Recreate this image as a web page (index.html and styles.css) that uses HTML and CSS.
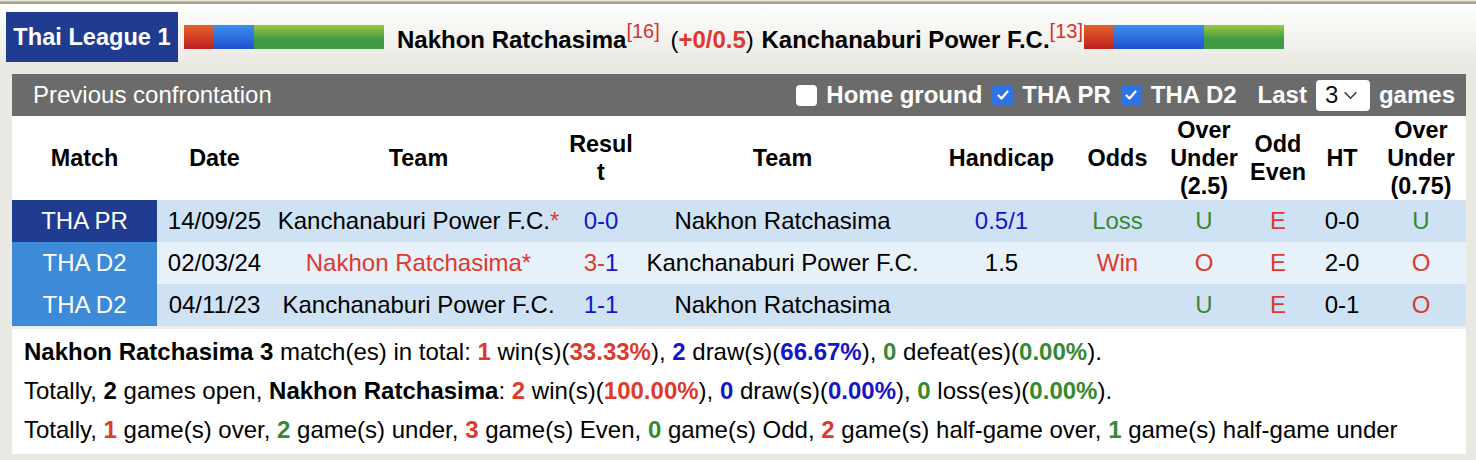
FILE: index.html
```html
<!DOCTYPE html>
<html lang="en">
<head>
<meta charset="utf-8">
<title>Previous confrontation</title>
<link rel="stylesheet" href="styles.css">
</head>
<body>
<div class="rule"></div>
<header class="topbar">
  <div class="league">Thai League 1</div>
  <div class="formbar"><span class="seg red w30"></span><span class="seg blue w40"></span><span class="seg green w130"></span></div>
  <div class="matchup">
    <span class="team">Nakhon Ratchasima</span><sup class="rank">[16]</sup>
    <span class="hcp">(<b class="red-t">+0/0.5</b>)</span>
    <span class="team">Kanchanaburi Power F.C.</span><sup class="rank">[13]</sup>
  </div>
  <div class="formbar tight"><span class="seg red w30"></span><span class="seg blue w90"></span><span class="seg green w80"></span></div>
</header>

<section class="panel">
  <div class="panel-head">
    <div class="title">Previous confrontation</div>
    <div class="filters">
      <label class="opt"><span class="box"></span>Home ground</label>
      <label class="opt"><span class="box on"><svg viewBox="0 0 20 20" width="20" height="20"><path d="M5.5 10.5 L8.5 13.5 L14.5 6.5" fill="none" stroke="#fff" stroke-width="2.2" stroke-linecap="round" stroke-linejoin="round"/></svg></span>THA PR</label>
      <label class="opt"><span class="box on"><svg viewBox="0 0 20 20" width="20" height="20"><path d="M5.5 10.5 L8.5 13.5 L14.5 6.5" fill="none" stroke="#fff" stroke-width="2.2" stroke-linecap="round" stroke-linejoin="round"/></svg></span>THA D2</label>
      <span class="last">Last</span>
      <span class="select">3<svg viewBox="0 0 16 10" width="15" height="9"><path d="M1.5 1.5 L8 8 L14.5 1.5" fill="none" stroke="#333" stroke-width="1.6"/></svg></span>
      <span class="games">games</span>
    </div>
  </div>

  <table class="grid">
    <colgroup>
      <col class="c-match"><col class="c-date"><col class="c-team"><col class="c-res"><col class="c-team2"><col class="c-hcp"><col class="c-odds"><col class="c-ou"><col class="c-oe"><col class="c-ht"><col class="c-ou2">
    </colgroup>
    <thead>
      <tr>
        <th>Match</th><th>Date</th><th>Team</th><th class="res">Result</th><th>Team</th><th>Handicap</th><th>Odds</th><th>Over Under (2.5)</th><th>Odd Even</th><th>HT</th><th>Over Under (0.75)</th>
      </tr>
    </thead>
    <tbody>
      <tr class="r-a">
        <td class="lg dark">THA PR</td><td>14/09/25</td><td>Kanchanaburi Power F.C.<span class="red-t">*</span></td><td class="blue-t">0-0</td><td>Nakhon Ratchasima</td><td class="blue-t">0.5/1</td><td class="green-t">Loss</td><td class="green-t">U</td><td class="red-t">E</td><td>0-0</td><td class="green-t">U</td>
      </tr>
      <tr class="r-b">
        <td class="lg light">THA D2</td><td>02/03/24</td><td class="red-t">Nakhon Ratchasima*</td><td><span class="red-t">3</span><span class="red-t">-</span><span class="blue-t">1</span></td><td>Kanchanaburi Power F.C.</td><td>1.5</td><td class="red-t">Win</td><td class="red-t">O</td><td class="red-t">E</td><td>2-0</td><td class="red-t">O</td>
      </tr>
      <tr class="r-a">
        <td class="lg light">THA D2</td><td>04/11/23</td><td>Kanchanaburi Power F.C.</td><td class="blue-t">1-1</td><td>Nakhon Ratchasima</td><td></td><td></td><td class="green-t">U</td><td class="red-t">E</td><td>0-1</td><td class="red-t">O</td>
      </tr>
    </tbody>
  </table>

  <div class="summary">
    <p><b>Nakhon Ratchasima 3</b> match(es) in total: <b class="red-t">1</b> win(s)(<b class="red-t">33.33%</b>), <b class="blue-t">2</b> draw(s)(<b class="blue-t">66.67%</b>), <b class="green-t">0</b> defeat(es)(<b class="green-t">0.00%</b>).</p>
    <p>Totally, <b>2</b> games open, <b>Nakhon Ratchasima</b>: <b class="red-t">2</b> win(s)(<b class="red-t">100.00%</b>), <b class="blue-t">0</b> draw(s)(<b class="blue-t">0.00%</b>), <b class="green-t">0</b> loss(es)(<b class="green-t">0.00%</b>).</p>
    <p>Totally, <b class="red-t">1</b> game(s) over, <b class="green-t">2</b> game(s) under, <b class="red-t">3</b> game(s) Even, <b class="green-t">0</b> game(s) Odd, <b class="red-t">2</b> game(s) half-game over, <b class="green-t">1</b> game(s) half-game under</p>
  </div>
</section>
</body>
</html>
```

FILE: styles.css
```css
* { box-sizing: border-box; }

html, body {
  margin: 0;
  padding: 0;
  background: #e9e8e2;
  font-family: "Liberation Sans", Arial, sans-serif;
  font-size: 24px;
  color: #000;
}

.rule {
  margin-top: 1px;
  height: 3px;
  background: linear-gradient(#c4bd9f, #9d9474);
}

.topbar {
  display: flex;
  align-items: center;
  padding: 8px 0 4px 6px;
  background: linear-gradient(#ffffff, #e9e8e2);
}

.league {
  width: 172px;
  height: 50px;
  background: #1f3c91;
  color: #fff;
  font-weight: bold;
  font-size: 23.6px;
  display: flex;
  align-items: center;
  justify-content: center;
}

.formbar {
  display: flex;
  height: 24px;
  margin-left: 6px;
}
.formbar.tight { margin-left: 1px; }

.seg { display: block; height: 24px; }
.seg.red { background: linear-gradient(#e3612b, #bf2020); }
.seg.blue { background: linear-gradient(#3a8ff0, #2150cf); }
.seg.green { background: linear-gradient(#9cc840, #3f9a43 60%); }
.w30 { width: 30px; }
.w40 { width: 40px; }
.w80 { width: 80px; }
.w90 { width: 90px; }
.w130 { width: 130px; }

.matchup {
  margin-left: 13px;
  padding-top: 6px;
  white-space: nowrap;
}
.matchup .team { font-weight: bold; }
.rank {
  color: #d8322a;
  font-size: 20px;
  vertical-align: 10px;
  line-height: 0;
}
.hcp { margin: 0 1px 0 4px; font-weight: normal; }

.red-t { color: #dd3a2e; }
.blue-t { color: #1515c8; }
.green-t { color: #36892f; }

.panel {
  margin: 8px 10px 0 12px;
  background: #fff;
}

.panel-head {
  height: 42px;
  background: #6b6b6b;
  color: #fff;
  display: flex;
  align-items: center;
  justify-content: space-between;
  padding: 0 11px 0 21px;
}

.filters {
  display: flex;
  align-items: center;
  font-weight: bold;
  font-size: 24px;
}

.opt {
  display: flex;
  align-items: center;
  margin-left: 10px;
  flex: none;
}

.box {
  flex: none;
  width: 21px;
  height: 21px;
  border-radius: 4px;
  background: #fff;
  margin-right: 9px;
  display: flex;
  align-items: center;
  justify-content: center;
}
.box.on { background: #2f72e6; }

.last { margin-left: 21px; }

.select {
  flex: none;
  margin-left: 9px;
  width: 54px;
  height: 31px;
  background: #fff;
  border-radius: 4px;
  color: #111;
  font-weight: normal;
  display: flex;
  align-items: center;
  padding-left: 9px;
  gap: 5px;
}

.games { margin-left: 9px; }

.grid {
  width: 100%;
  border-collapse: collapse;
  table-layout: fixed;
}

.c-match { width: 145px; }
.c-date { width: 115px; }
.c-team { width: 293px; }
.c-res { width: 72px; }
.c-team2 { width: 291px; }
.c-hcp { width: 147px; }
.c-odds { width: 85px; }
.c-ou { width: 88px; }
.c-oe { width: 60px; }
.c-ht { width: 68px; }
.c-ou2 { width: 90px; }

.grid th {
  height: 84px;
  line-height: 28px;
  font-size: 23.4px;
  font-weight: bold;
  padding: 0 1px;
  text-align: center;
  vertical-align: middle;
}
.grid th.res {
  padding: 0 3px;
  word-break: break-all;
}

.grid td {
  height: 42px;
  padding: 0;
  text-align: center;
  white-space: nowrap;
  vertical-align: middle;
}

.r-a td { background: #cfe2f3; }
.r-b td { background: #e7f1fa; }
.grid td.lg { color: #fff; }
.grid td.dark { background: #1f3c91; }
.grid td.light { background: #3d8ad9; }

.summary {
  border-top: 3px solid #eeeeee;
  padding: 3px 12px 5px;
}
.summary p {
  margin: 0;
  line-height: 39px;
  white-space: nowrap;
}
```
